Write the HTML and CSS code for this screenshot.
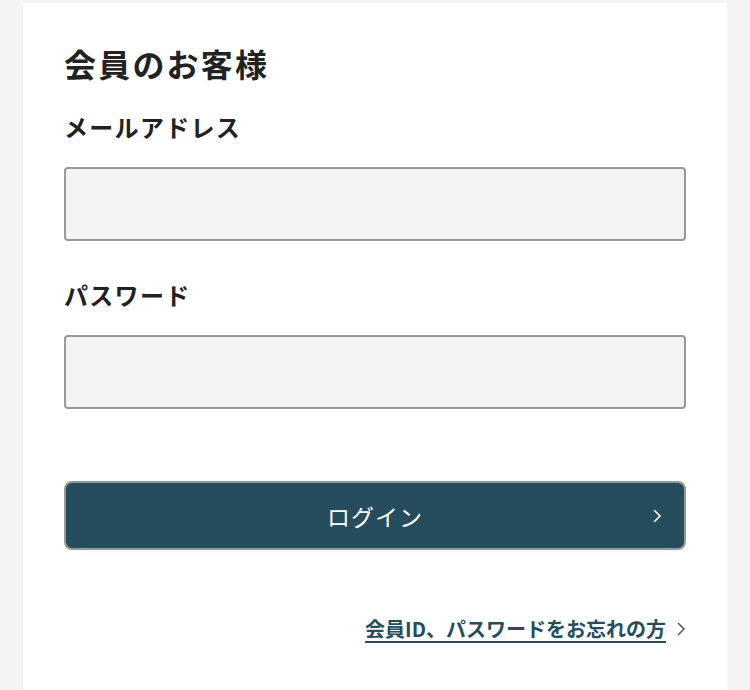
FILE: index.html
```html
<!DOCTYPE html>
<html lang="ja">
<head>
  <meta charset="UTF-8">
  <meta name="viewport" content="width=device-width, initial-scale=1.0">
  <title>ログイン</title>
  <link rel="stylesheet" href="styles.css">
</head>
<body>
  <!-- Login card -->
  <div class="card">
    <h1 class="title">会員のお客様</h1>

    <form class="login-form">
      <label class="field-label" for="email">メールアドレス</label>
      <input class="field-input" type="email" id="email">

      <label class="field-label" for="password">パスワード</label>
      <input class="field-input" type="password" id="password">

      <button type="button" class="login-btn">
        ログイン
        <svg class="btn-arrow" width="10" height="16" viewBox="0 0 10 16">
          <path d="M2 2 L8 8 L2 14" fill="none" stroke="#fff" stroke-width="1.6"/>
        </svg>
      </button>
    </form>

    <div class="forgot">
      <a href="#">会員ID、パスワードをお忘れの方</a>
      <svg class="forgot-arrow" width="10" height="16" viewBox="0 0 10 16">
        <path d="M2 2 L8 8 L2 14" fill="none" stroke="#555" stroke-width="1.5"/>
      </svg>
    </div>
  </div>
</body>
</html>
```

FILE: styles.css
```css
/* General Styles */
body {
  margin: 0;
  background-color: #f4f4f4;
  font-family: "Noto Sans CJK JP", "Noto Sans", sans-serif;
  color: #222;
  overflow: hidden;
}
.card {
  background: #fff;
  margin: 3px 23px 0;
  padding: 36px 41px 0;
  height: 687px;
  box-sizing: border-box;
}
.title {
  font-size: 32px;
  font-weight: bold;
  letter-spacing: 2.2px;
  line-height: 48px;
  margin: 0 0 22px;
}
.login-form {
  display: flex;
  flex-direction: column;
}
.field-label {
  font-size: 24px;
  font-weight: bold;
  letter-spacing: 1.3px;
  line-height: 36px;
  margin-bottom: 22px;
}
.field-input {
  height: 74px;
  box-sizing: border-box;
  background: #f4f4f4;
  border: 2px solid #999;
  border-radius: 4px;
  margin: 0 0 36px;
  font-size: 20px;
  padding: 0 14px;
}
.login-btn {
  position: relative;
  margin-top: 36px;
  height: 69px;
  background: #254d5e;
  border: 2px solid #999;
  border-radius: 8px;
  color: #fff;
  font-family: inherit;
  font-size: 23px;
  letter-spacing: 1px;
  cursor: pointer;
}
.btn-arrow {
  position: absolute;
  right: 22px;
  top: 50%;
  margin-top: -8px;
}
.forgot {
  display: flex;
  justify-content: flex-end;
  align-items: center;
  gap: 10px;
  margin-top: 64px;
}
.forgot a {
  font-size: 20px;
  font-weight: bold;
  color: #254d5e;
  text-decoration: underline;
  text-underline-offset: 4px;
  text-decoration-thickness: 2px;
}
```
